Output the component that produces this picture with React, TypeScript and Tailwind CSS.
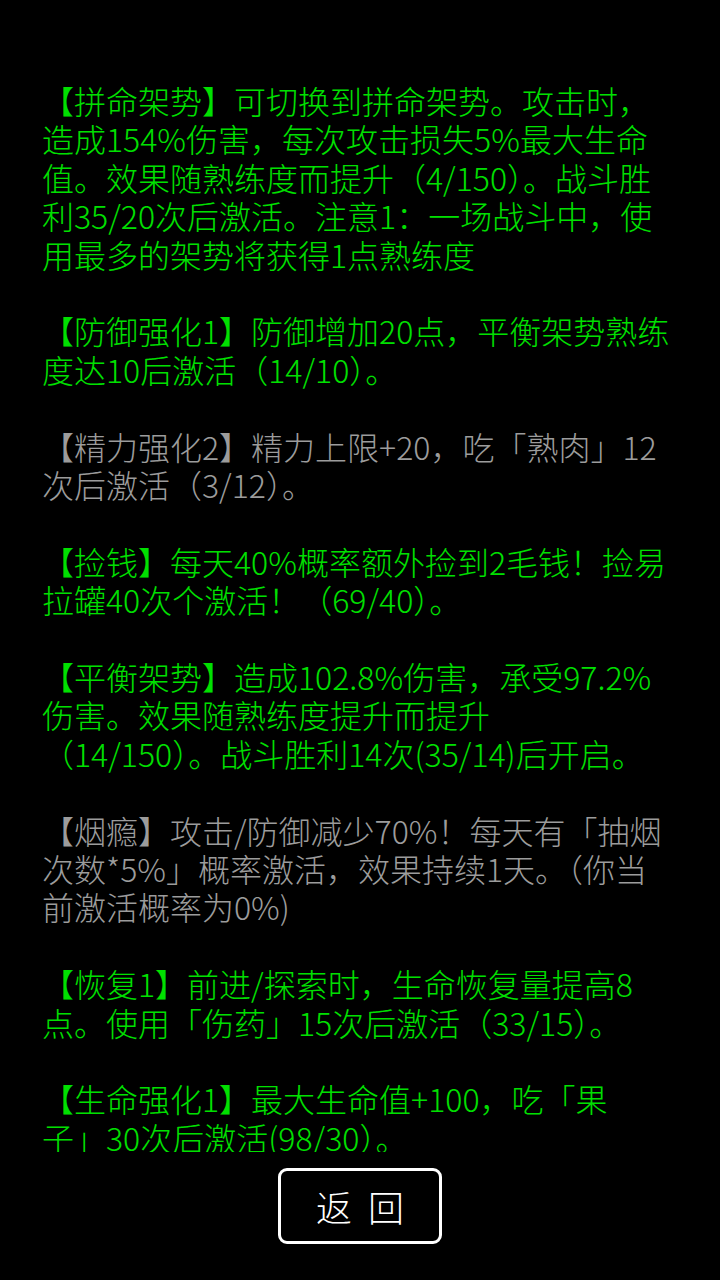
// Talent list screen: green = active, gray = not yet active
const lines: { color: "on" | "off"; rows: string[] }[] = [
  {
    color: "on",
    rows: [
      "【拼命架势】可切换到拼命架势。攻击时，",
      "造成154%伤害，每次攻击损失5%最大生命",
      "值。效果随熟练度而提升（4/150）。战斗胜",
      "利35/20次后激活。注意1：一场战斗中，使",
      "用最多的架势将获得1点熟练度",
    ],
  },
  {
    color: "on",
    rows: ["【防御强化1】防御增加20点，平衡架势熟练", "度达10后激活（14/10）。"],
  },
  {
    color: "off",
    rows: ["【精力强化2】精力上限+20，吃「熟肉」12", "次后激活（3/12）。"],
  },
  {
    color: "on",
    rows: ["【捡钱】每天40%概率额外捡到2毛钱！捡易", "拉罐40次个激活！（69/40）。"],
  },
  {
    color: "on",
    rows: [
      "【平衡架势】造成102.8%伤害，承受97.2%",
      "伤害。效果随熟练度提升而提升",
      "（14/150）。战斗胜利14次(35/14)后开启。",
    ],
  },
  {
    color: "off",
    rows: [
      "【烟瘾】攻击/防御减少70%！每天有「抽烟",
      "次数*5%」概率激活，效果持续1天。（你当",
      "前激活概率为0%)",
    ],
  },
  {
    color: "on",
    rows: ["【恢复1】前进/探索时，生命恢复量提高8", "点。使用「伤药」15次后激活（33/15）。"],
  },
  {
    color: "on",
    rows: ["【生命强化1】最大生命值+100，吃「果", "子」30次后激活(98/30）。"],
  },
];

export default function App() {
  return (
    <div
      className="flex h-[1280px] w-[720px] flex-col bg-black"
      style={{ fontFamily: '"Noto Sans CJK SC", "Noto Sans", sans-serif' }}
    >
      <div className="h-[1152px] overflow-hidden pl-[42px] pr-[30px] pt-[81px]">
        <div className="flex flex-col gap-[38.4px]">
          {lines.map((b, i) => (
            <div
              key={i}
              className={`text-[32px] font-light leading-[38.4px] ${
                b.color === "on" ? "text-[#00e000]" : "text-[#9c9c9c]"
              }`}
            >
              {b.rows.map((r, j) => (
                <div key={j} className="whitespace-nowrap">
                  {r}
                </div>
              ))}
            </div>
          ))}
        </div>
      </div>

      {/* Back button */}
      <div className="flex justify-center pt-[16px]">
        <button className="flex h-[76px] w-[164px] items-center justify-center rounded-[9px] border-[3px] border-white bg-black text-[36px] font-light text-white">
          返&nbsp;&nbsp;回
        </button>
      </div>
    </div>
  );
}
